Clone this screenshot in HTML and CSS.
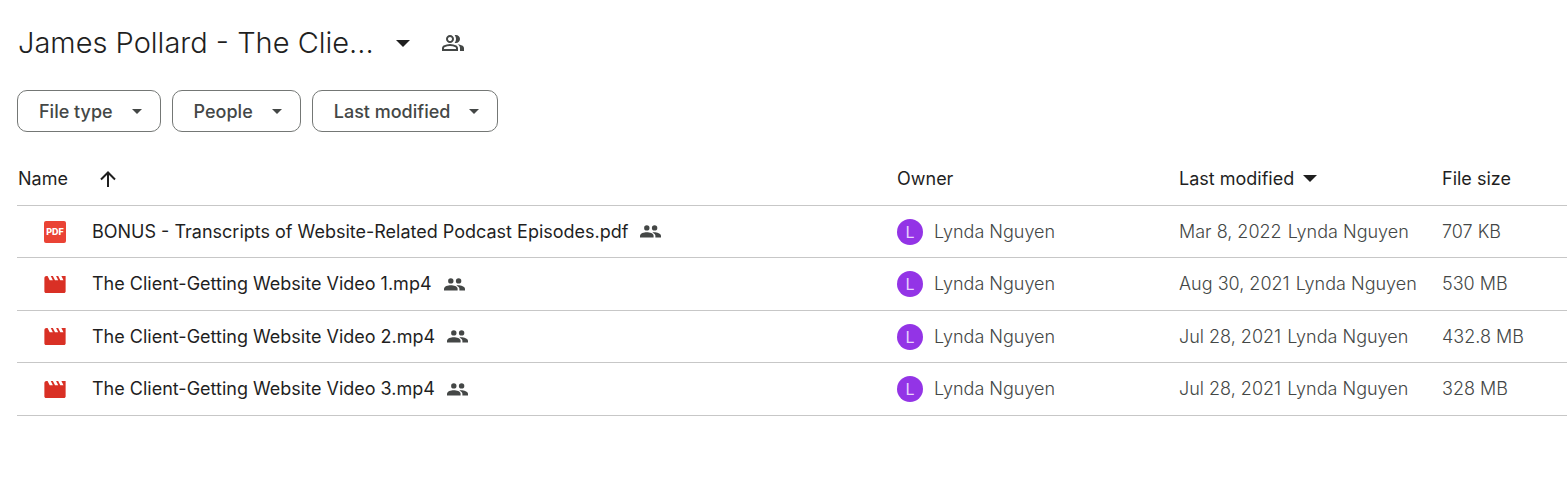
FILE: index.html
```html
<!DOCTYPE html>
<html lang="en">

<head>
  <meta charset="UTF-8">
  <meta name="viewport" content="width=device-width, initial-scale=1.0">
  <title>Shared folder</title>

  <link rel="stylesheet" href="styles.css">
</head>

<body>
  <!-- shapes used more than once -->
  <svg class="sprite" aria-hidden="true">
    <symbol id="caret" viewBox="0 0 10 5">
      <path d="M0 0h10L5 5z" />
    </symbol>
    <symbol id="people" viewBox="0 0 21 13">
      <circle cx="6.8" cy="2.9" r="2.7" />
      <circle cx="14.6" cy="2.9" r="2.7" />
      <path d="M0 12.5v-1.7C0 8.4 4 7.3 6.8 7.3s6.8 1.1 6.8 3.5v1.7z" />
      <path d="M12.4 7.4c3.3-.5 8.6.8 8.6 3.5v1.6h-5.6v-1.7c0-1.500-1.300-2.600-3-3.400z" />
    </symbol>
    <symbol id="video" viewBox="2 4 20 16">
      <path d="M18 4l2 4h-3l-2-4h-2l2 4h-3l-2-4H8l2 4H7L5 4H4c-1.100 0-2 .9-2 2v12.500c0 .8.7 1.500 1.500 1.500h17c.8 0 1.500-.7 1.500-1.500V4z" />
    </symbol>
  </svg>

  <main>
    <header class="title-bar">
      <h1><button class="title">James Pollard - The Clie... <svg class="caret-big"><use href="#caret" /></svg></button></h1>
      <button class="share" aria-label="Manage access">
        <svg viewBox="1 4 22 16" width="22" height="16">
          <path d="M1 20v-2.8q0-.85.438-1.563T2.6 14.55q1.55-.775 3.15-1.163T9 13t3.25.388t3.15 1.162q.725.375 1.163 1.088T17 17.2V20zm18 0v-3q0-1.1-.612-2.113T16.65 13.15q1.275.15 2.4.513t2.1.887q.9.5 1.375 1.112T23 17v3zM9 12q-1.65 0-2.825-1.175T5 8t1.175-2.825T9 4t2.825 1.175T13 8t-1.175 2.825T9 12m10-4q0 1.65-1.175 2.825T15 12q-.275 0-.7-.062t-.7-.138q.675-.8 1.038-1.775T15 8t-.362-2.025T13.6 4.2q.35-.125.7-.163T15 4q1.65 0 2.825 1.175T19 8M3 18h12v-.8q0-.275-.137-.5t-.363-.35q-1.35-.675-2.725-1.012T9 15t-2.775.338T3.5 16.35q-.225.125-.363.35T3 17.2zm6-8q.825 0 1.413-.587T11 8t-.587-1.412T9 6t-1.412.588T7 8t.588 1.413T9 10" />
        </svg>
      </button>
    </header>

    <div class="filters">
      <button class="chip">File type <svg class="caret"><use href="#caret" /></svg></button>
      <button class="chip">People <svg class="caret"><use href="#caret" /></svg></button>
      <button class="chip">Last modified <svg class="caret"><use href="#caret" /></svg></button>
    </div>

    <table class="files">
      <thead>
        <tr>
          <th class="col-name">
            <button class="sort">Name
              <svg class="arrow" viewBox="0 0 16 16"><path d="M8 16V2M1 8.500l7-7 7 7" /></svg>
            </button>
          </th>
          <th class="col-owner">Owner</th>
          <th class="col-modified">
            <button class="sort modified">Last modified <svg class="caret-big"><use href="#caret" /></svg></button>
          </th>
          <th class="col-size">File size</th>
        </tr>
      </thead>
      <tbody>
        <tr>
          <td>
            <div class="file">
              <svg class="pdf-icon" viewBox="0 0 22 22">
                <rect width="22" height="22" rx="2" />
                <text x="11" y="14" text-anchor="middle">PDF</text>
              </svg>
              <span class="file-name">BONUS - Transcripts of Website-Related Podcast Episodes.pdf</span>
              <svg class="people"><use href="#people" /></svg>
            </div>
          </td>
          <td><div class="owner"><span class="avatar">L</span>Lynda Nguyen</div></td>
          <td><span class="date">Mar 8, 2022</span>Lynda Nguyen</td>
          <td>707 KB</td>
        </tr>
        <tr>
          <td>
            <div class="file">
              <svg class="video-icon"><use href="#video" /></svg>
              <span class="file-name">The Client-Getting Website Video 1.mp4</span>
              <svg class="people"><use href="#people" /></svg>
            </div>
          </td>
          <td><div class="owner"><span class="avatar">L</span>Lynda Nguyen</div></td>
          <td><span class="date">Aug 30, 2021</span>Lynda Nguyen</td>
          <td>530 MB</td>
        </tr>
        <tr>
          <td>
            <div class="file">
              <svg class="video-icon"><use href="#video" /></svg>
              <span class="file-name">The Client-Getting Website Video 2.mp4</span>
              <svg class="people"><use href="#people" /></svg>
            </div>
          </td>
          <td><div class="owner"><span class="avatar">L</span>Lynda Nguyen</div></td>
          <td><span class="date">Jul 28, 2021</span>Lynda Nguyen</td>
          <td>432.8 MB</td>
        </tr>
        <tr>
          <td>
            <div class="file">
              <svg class="video-icon"><use href="#video" /></svg>
              <span class="file-name">The Client-Getting Website Video 3.mp4</span>
              <svg class="people"><use href="#people" /></svg>
            </div>
          </td>
          <td><div class="owner"><span class="avatar">L</span>Lynda Nguyen</div></td>
          <td><span class="date">Jul 28, 2021</span>Lynda Nguyen</td>
          <td>328 MB</td>
        </tr>
      </tbody>
    </table>
  </main>
</body>

</html>
```

FILE: styles.css
```css
* {
  box-sizing: border-box;
}

body {
  background: #fff;
  color: #1f1f1f;
  font-family: Inter, "Open Sans", sans-serif;
  font-size: 18px;
  line-height: 24px;
  margin: 0;
}

main {
  padding: 23px 0 0 17px;
}

button {
  align-items: center;
  background: none;
  border: 0;
  color: inherit;
  cursor: pointer;
  display: flex;
  font: inherit;
  padding: 0;
}

svg {
  display: block;
  flex: none;
  fill: currentColor;
}

.sprite {
  height: 0;
  position: absolute;
  width: 0;
}

.title-bar {
  align-items: center;
  display: flex;
  gap: 32px;
}

h1 {
  font-size: 29px;
  font-weight: 300;
  line-height: 40px;
  margin: 0;
}

.title {
  gap: 22px;
  padding-left: 1px;
}

.share {
  color: #444746;
}

.caret-big {
  height: 7px;
  width: 14px;
}

.caret {
  height: 5px;
  width: 10px;
}

.filters {
  color: #444746;
  display: flex;
  gap: 11px;
  margin-top: 27px;
}

.chip {
  border: 1px solid #747775;
  border-radius: 10px;
  font-weight: 500;
  gap: 19px;
  height: 42px;
  padding: 1px 18px 0 21px;
}

.files {
  border-collapse: collapse;
  margin-top: 21px;
  table-layout: fixed;
  width: 100%;
}

.files th,
.files td {
  border-bottom: 1px solid #c7c7c7;
  height: 52px;
  padding: 0;
  text-align: left;
  white-space: nowrap;
}

.files tbody tr:nth-child(even) td {
  height: 53px;
}

.files th {
  font-weight: 400;
}

.files td {
  color: #444746;
  font-weight: 300;
  padding-top: 1px;
}

.col-owner {
  width: 282px;
}

.col-modified {
  width: 263px;
}

.col-size {
  width: 125px;
}

.sort {
  gap: 32px;
  padding-left: 1px;
}

.modified {
  gap: 9px;
  padding-left: 0;
}

.arrow {
  fill: none;
  height: 16px;
  stroke: currentColor;
  stroke-width: 2;
  width: 16px;
}

.file {
  align-items: center;
  display: flex;
  padding-left: 27px;
}

.file-name {
  color: #1f1f1f;
  font-weight: 400;
  margin: 0 12px 0 26px;
}

.pdf-icon {
  fill: #ea4335;
  height: 22px;
  width: 22px;
}

.pdf-icon text {
  fill: #fff;
  font-size: 9px;
  font-weight: 800;
}

.video-icon {
  color: #d93025;
  height: 17px;
  width: 22px;
}

.people {
  color: #444746;
  height: 13px;
  width: 21px;
}

.owner {
  align-items: center;
  display: flex;
  gap: 11px;
}

.avatar {
  background: #9334e6;
  border-radius: 50%;
  color: #e9d2fd;
  font-size: 16px;
  font-weight: 400;
  height: 26px;
  line-height: 26px;
  text-align: center;
  width: 26px;
}

.date {
  margin-right: 6px;
}
```
